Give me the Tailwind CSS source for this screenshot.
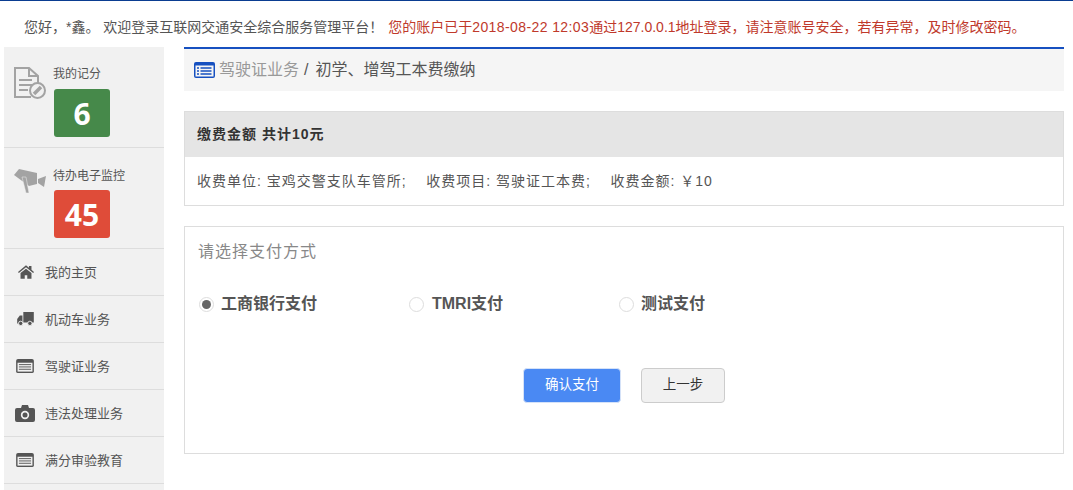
<!DOCTYPE html>
<html lang="zh">
<head>
    <meta charset="UTF-8">
    <title>缴纳</title>
    <script src="https://cdn.jsdelivr.net/npm/@tailwindcss/browser@4"></script>
</head>
<body class="bg-white h-[490px] overflow-hidden font-['Liberation_Sans','Noto_Sans_CJK_SC',sans-serif] text-[#555]">
<div class="border-t-[1px] border-[#0a3d91] h-[47px] pl-[24px] pt-[16px] text-[14px] leading-[20px] whitespace-nowrap">
    <span class="text-[#555]">您好，*鑫。 欢迎登录互联网交通安全综合服务管理平台！</span>
    <span class="text-[#c0392b] ml-[1px]">您的账户已于<span class="tracking-[0.4px]">2018-08-22 12:03</span>通过127.0.0.1地址登录，请注意账号安全，若有异常，及时修改密码。</span>
</div>
<div class="flex items-start pl-[4px]">
    <aside class="w-[160px] bg-[#f1f1f1] shrink-0 text-[#555]">
        <div class="h-[101px] border-b border-[#ddd] flex">
            <div class="w-[49px] pl-[10px] pt-[20px]">
                <svg width="33" height="33" viewBox="0 0 33 33" fill="none" stroke="#a3a3a3" stroke-width="2"><path d="M17 30H1V1h14l9 8v8"/><path d="M15 1v8h9"/><path d="M5 13h13M5 18h13M5 23h9"/><circle cx="23.500" cy="23.500" r="7.500" fill="#f1f1f1"/><path d="M20 27l7-7" stroke-width="3.500"/></svg>
            </div>
            <div>
                <div class="text-[12px] leading-[16px] mt-[19px]">我的记分</div>
                <div class="w-[56px] h-[48px] mt-[7px] ml-[1px] bg-[#46894a] rounded-[3px] text-white text-[30px] font-bold flex items-center justify-center font-['Open_Sans',sans-serif]">6</div>
            </div>
        </div>
        <div class="h-[101px] border-b border-[#ddd] flex">
            <div class="w-[49px] pl-[10px] pt-[20px]">
                <svg width="33" height="26" viewBox="0 0 33 26" fill="#a3a3a3"><path d="M0 7L5 1l18 4v11l-8 2z"/><path d="M8 9h4l3 16h-3z" stroke="#f1f1f1" stroke-width="0.500"/><path d="M24 11l8-3-2 11-6-4z"/></svg>
            </div>
            <div>
                <div class="text-[12px] leading-[16px] mt-[20px]">待办电子监控</div>
                <div class="w-[56px] h-[48px] mt-[6px] ml-[1px] bg-[#df4c39] rounded-[3px] text-white text-[30px] font-bold flex items-center justify-center font-['Open_Sans',sans-serif]">45</div>
            </div>
        </div>
        <div class="h-[47px] border-b border-[#ddd] flex items-center">
            <div class="w-[41px] pl-[14px]"><svg width="16" height="14" viewBox="0 0 19 16" fill="#555"><path d="M9.500 0L0 8l1 1.300L9.500 2.500 18 9.300 19 8l-3-2.600V1h-3v2z"/><path d="M9.500 4L3 9.300V16h5v-4h3v4h5V9.300z"/></svg></div>
            <span class="text-[13px] mt-[1px]">我的主页</span>
        </div>
        <div class="h-[47px] border-b border-[#ddd] flex items-center">
            <div class="w-[41px] pl-[13px]"><svg width="17" height="14" viewBox="0 0 19 16" fill="#555"><path d="M7 0h12v12H7z"/><path d="M6 4H3L0 8v5h6z"/><circle cx="4" cy="13" r="2.500" stroke="#f1f1f1"/><circle cx="14.500" cy="13" r="2.500" stroke="#f1f1f1"/></svg></div>
            <span class="text-[13px] mt-[1px]">机动车业务</span>
        </div>
        <div class="h-[47px] border-b border-[#ddd] flex items-center">
            <div class="w-[41px] pl-[12px]"><svg width="18" height="14" viewBox="0 0 19 15"><rect width="19" height="15" rx="2" fill="#555"/><rect x="1.500" y="4" width="16" height="9.500" fill="#f1f1f1"/><path d="M3 6h13M3 8.500h13M3 11h13" stroke="#555"/></svg></div>
            <span class="text-[13px] mt-[1px]">驾驶证业务</span>
        </div>
        <div class="h-[47px] border-b border-[#ddd] flex items-center">
            <div class="w-[41px] pl-[11px]"><svg width="20" height="17" viewBox="0 0 20 17" fill="#555"><path d="M2 3h4l1-3h6l1 3h4a2 2 0 012 2v10a2 2 0 01-2 2H2a2 2 0 01-2-2V5a2 2 0 012-2z"/><circle cx="10" cy="10" r="4.200" fill="#f1f1f1"/><circle cx="10" cy="10" r="2.500"/></svg></div>
            <span class="text-[13px] mt-[1px]">违法处理业务</span>
        </div>
        <div class="h-[47px] border-b border-[#ddd] flex items-center">
            <div class="w-[41px] pl-[12px]"><svg width="18" height="14" viewBox="0 0 19 15"><rect width="19" height="15" rx="2" fill="#555"/><rect x="1.500" y="4" width="16" height="9.500" fill="#f1f1f1"/><path d="M3 6h13M3 8.500h13M3 11h13" stroke="#555"/></svg></div>
            <span class="text-[13px] mt-[1px]">满分审验教育</span>
        </div>
        <div class="h-[10px]"></div>
    </aside>
    <main class="ml-[20px] w-[880px]">
        <div class="h-[44px] bg-[#f5f5f5] border-t-2 border-[#1650c0] flex items-center pl-[10px] text-[16px]">
            <svg class="mr-[4px]" width="21" height="16" viewBox="0 0 21 16"><rect width="21" height="16" rx="2" fill="#1650c0"/><rect x="1.500" y="3.500" width="18" height="11" fill="#f5f5f5"/><path d="M3 6h2M3 9h2M3 12h2M6.500 6h11M6.500 9h11M6.500 12h11" stroke="#1650c0" stroke-width="1.500"/></svg>
            <span class="text-[#999]">驾驶证业务</span><span class="ml-[5px]">/</span><span class="ml-[7px]">初学、增驾工本费缴纳</span>
        </div>
        <section class="mt-[20px] border border-[#ddd] h-[95px]">
            <div class="h-[45px] bg-[#e5e5e5] flex items-center pl-[12px] text-[14px] tracking-[1px] font-bold text-[#333]">缴费金额 共计10元</div>
            <div class="h-[48px] flex items-center pl-[12px] text-[14px] tracking-[1px] whitespace-pre">收费单位: 宝鸡交警支队车管所;    收费项目: 驾驶证工本费;    收费金额: ￥10</div>
        </section>
        <section class="mt-[20px] border border-[#ddd] h-[228px] relative">
            <div class="text-[16px] tracking-[1px] text-[#888] pl-[13px] pt-[15px] leading-[20px]">请选择支付方式</div>
            <div class="flex mt-[30px] pl-[14px] text-[16px] font-bold text-[#555] leading-[24px]">
                <label class="w-[210px] flex items-center"><span class="w-[15px] h-[15px] rounded-full border border-[#ddd] flex items-center justify-center mr-[7px]"><span class="w-[9px] h-[9px] rounded-full bg-[#666]"></span></span>工商银行支付</label>
                <label class="w-[210px] flex items-center"><span class="w-[15px] h-[15px] rounded-full border border-[#ddd] mr-[8px]"></span>TMRI支付</label>
                <label class="flex items-center"><span class="w-[15px] h-[15px] rounded-full border border-[#ddd] mr-[7px]"></span>测试支付</label>
            </div>
            <div class="flex mt-[52px] pl-[338px] gap-[20px] text-[13.5px]">
                <button class="w-[98px] h-[35px] bg-[#4a89f3] border border-[#d5e2f8] rounded-[4px] text-white">确认支付</button>
                <button class="w-[84px] h-[35px] bg-[#f1f1f1] border border-[#ccc] rounded-[4px] text-[#333]">上一步</button>
            </div>
        </section>
    </main>
</div>
</body>
</html>
